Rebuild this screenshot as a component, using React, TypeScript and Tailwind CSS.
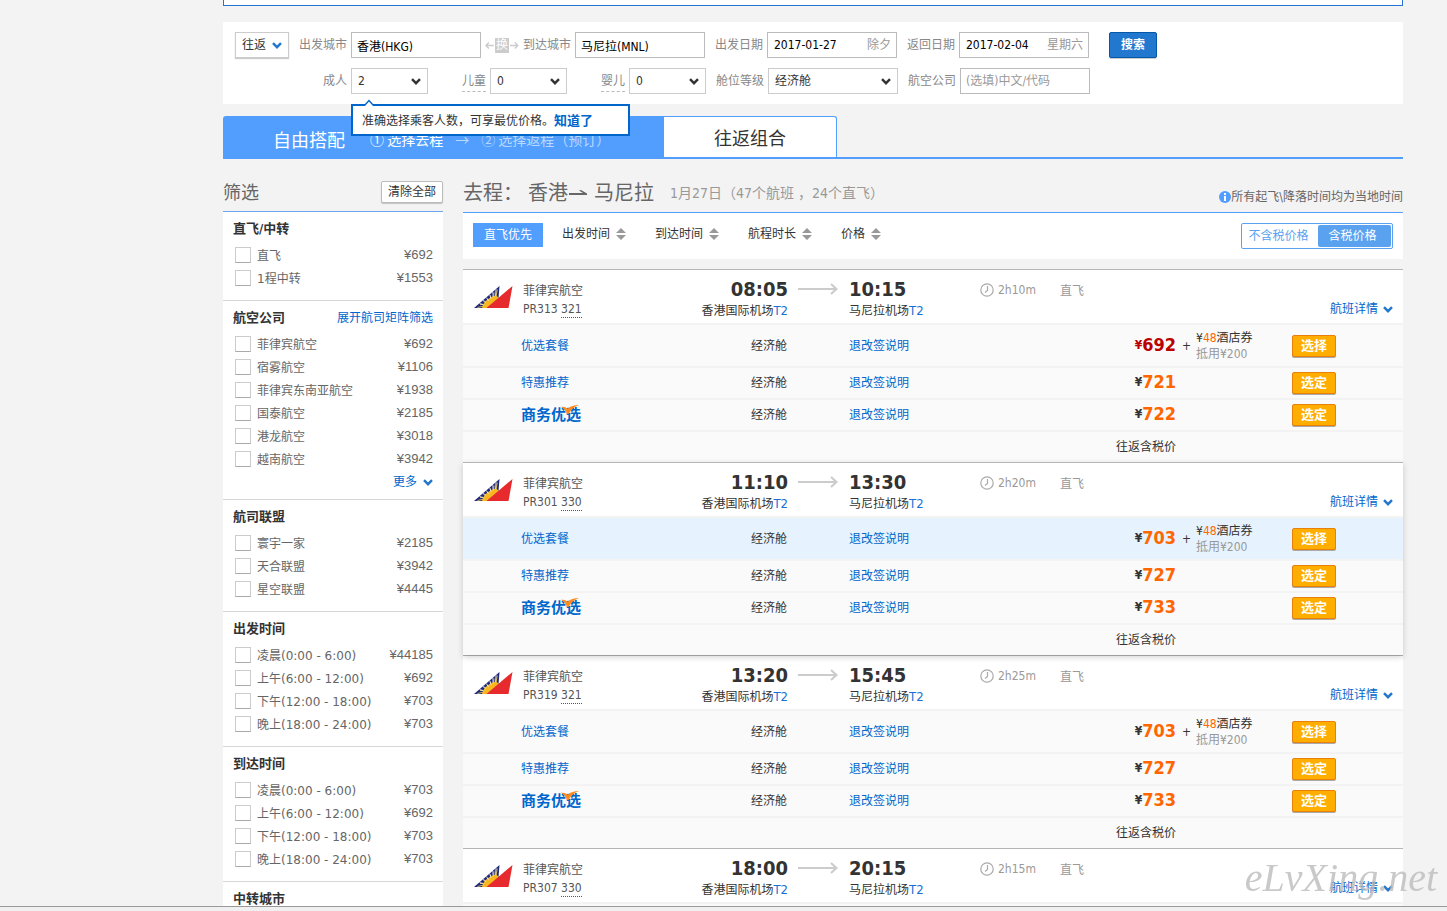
import { useState } from "react";
import type { ReactNode } from "react";
import clsx from "clsx";

type FilterOption = { label: string; price: string };

type FilterGroup = {
  title: string;
  link?: string;
  more?: boolean;
  options: FilterOption[];
};

const filterGroups: FilterGroup[] = [
  {
    title: "直飞/中转",
    options: [
      { label: "直飞", price: "¥692" },
      { label: "1程中转", price: "¥1553" },
    ],
  },
  {
    title: "航空公司",
    link: "展开航司矩阵筛选",
    more: true,
    options: [
      { label: "菲律宾航空", price: "¥692" },
      { label: "宿雾航空", price: "¥1106" },
      { label: "菲律宾东南亚航空", price: "¥1938" },
      { label: "国泰航空", price: "¥2185" },
      { label: "港龙航空", price: "¥3018" },
      { label: "越南航空", price: "¥3942" },
    ],
  },
  {
    title: "航司联盟",
    options: [
      { label: "寰宇一家", price: "¥2185" },
      { label: "天合联盟", price: "¥3942" },
      { label: "星空联盟", price: "¥4445" },
    ],
  },
  {
    title: "出发时间",
    options: [
      { label: "凌晨(0:00 - 6:00)", price: "¥44185" },
      { label: "上午(6:00 - 12:00)", price: "¥692" },
      { label: "下午(12:00 - 18:00)", price: "¥703" },
      { label: "晚上(18:00 - 24:00)", price: "¥703" },
    ],
  },
  {
    title: "到达时间",
    options: [
      { label: "凌晨(0:00 - 6:00)", price: "¥703" },
      { label: "上午(6:00 - 12:00)", price: "¥692" },
      { label: "下午(12:00 - 18:00)", price: "¥703" },
      { label: "晚上(18:00 - 24:00)", price: "¥703" },
    ],
  },
  { title: "中转城市", options: [] },
];

type Flight = {
  no: string;
  plane: string;
  depart: string;
  arrive: string;
  duration: string;
  prices: [string, string, string];
  lowest?: boolean;
  active?: boolean;
};

const flights: Flight[] = [
  { no: "PR313", plane: "321", depart: "08:05", arrive: "10:15", duration: "2h10m", prices: ["692", "721", "722"], lowest: true },
  { no: "PR301", plane: "330", depart: "11:10", arrive: "13:30", duration: "2h20m", prices: ["703", "727", "733"], active: true },
  { no: "PR319", plane: "321", depart: "13:20", arrive: "15:45", duration: "2h25m", prices: ["703", "727", "733"] },
  { no: "PR307", plane: "330", depart: "18:00", arrive: "20:15", duration: "2h15m", prices: ["703", "727", "733"] },
];

const sortKeys = ["出发时间", "到达时间", "航程时长", "价格"];

function Chevron({ className }: { className?: string }) {
  return (
    <svg viewBox="0 0 10 7" className={clsx("h-[7px] w-[10px] shrink-0", className)} fill="none" stroke="currentColor" strokeWidth="2.4">
      <path d="M1 1.2 5 5.2 9 1.2" />
    </svg>
  );
}

function SortIcon() {
  return (
    <svg viewBox="0 0 10 12" className="h-3 w-[10px] fill-[#999]">
      <path d="M5 0 10 5H0zM0 7h10l-5 5z" />
    </svg>
  );
}

function AirlineLogo() {
  return (
    <svg viewBox="0 0 39 23" className="h-[23px] w-[39px]">
      <path d="M0 22 25.5 0 24.500 12 13 22z" fill="#1f2a7a" />
      <path d="M8 22C9 17 13 12 22 9.500L25 12 13 22z" fill="#f8b71c" />
      <path d="M3.500 21.500 10 20M6 18.500 11 18.500M9.500 15.500 12.500 17M13 12.500 14.500 15.500M16.500 9.500 17 13.500M20 6.500 19.500 12M23.200 3.500 22 11" stroke="#e9c55c" strokeWidth=".9" />
      <path d="M5.500 17.300 9 18.500M9 14.300 12 16.200M12.300 11.500 14.500 14.500M15.600 8.600 17 12.500M18.800 6 19 11M22 3.200 21.400 10" stroke="#fff" strokeWidth=".7" />
      <path d="M38.500 0 34.500 22H12.500z" fill="#e62a2e" />
    </svg>
  );
}

function Label({ htmlFor, dashed, className, children }: { htmlFor: string; dashed?: boolean; className?: string; children: ReactNode }) {
  return (
    <label htmlFor={htmlFor} className={clsx("shrink-0 pr-1 text-right leading-5 text-[#888]", className ?? "w-[62px]")}>
      <span className={clsx("inline-block", dashed && "border-b border-dashed border-[#bbb]")}>{children}</span>
    </label>
  );
}

function SelectBox({ id, options, className }: { id: string; options: string[]; className: string }) {
  return (
    <div className={clsx("relative h-[26px] shrink-0", className)}>
      <select id={id} className="h-full w-full appearance-none border border-[#ccc] bg-white pl-[6px] text-[#333] outline-none">
        {options.map((option) => (
          <option key={option}>{option}</option>
        ))}
      </select>
      <Chevron className="pointer-events-none absolute top-[10px] right-[7px] text-[#333]" />
    </div>
  );
}

function DateBox({ id, value, note }: { id: string; value: string; note: string }) {
  return (
    <div className="flex h-[26px] w-[130px] shrink-0 items-center border border-[#bbb] bg-white pr-[5px] pl-[6px]">
      <input id={id} defaultValue={value} className="w-0 flex-1 text-black outline-none" />
      <span className="text-[#999]">{note}</span>
    </div>
  );
}

const textBox = "h-[26px] w-[130px] shrink-0 border border-[#bbb] bg-white pl-[5px] text-black outline-none placeholder:text-[#999]";

function SearchPanel() {
  const [showTip, setShowTip] = useState(true);

  return (
    <form className="relative mt-4 flex flex-col gap-[10px] bg-white px-3 py-[10px]" onSubmit={(event) => event.preventDefault()}>
      <div className="flex items-center">
        <button type="button" className="flex h-[26px] w-[54px] shrink-0 items-center justify-between border border-[#ccc] px-[6px] text-[#333] shadow-[0_1px_1px_rgba(0,0,0,0.2)]">
          往返
          <Chevron className="text-[#2277cc]" />
        </button>
        <Label htmlFor="from">出发城市</Label>
        <input id="from" defaultValue="香港(HKG)" className={textBox} />
        <button type="button" aria-label="交换城市" className="ml-1 flex w-[34px] shrink-0 items-center justify-center gap-px text-[#ccc]">
          <svg viewBox="0 0 9 7" className="h-[7px] w-[9px]" fill="none" stroke="currentColor" strokeWidth="1.500">
            <path d="M4 .5 1 3.500 4 6.500M1 3.500h8" />
          </svg>
          <span className="h-[15px] w-[15px] bg-[#ccc] text-center leading-[15px] text-white">换</span>
          <svg viewBox="0 0 9 7" className="h-[7px] w-[9px]" fill="none" stroke="currentColor" strokeWidth="1.500">
            <path d="M5 .5 8 3.500 5 6.500M8 3.500H0" />
          </svg>
        </button>
        <Label htmlFor="to" className="w-14">到达城市</Label>
        <input id="to" defaultValue="马尼拉(MNL)" className={textBox} />
        <Label htmlFor="depart-date">出发日期</Label>
        <DateBox id="depart-date" value="2017-01-27" note="除夕" />
        <Label htmlFor="return-date">返回日期</Label>
        <DateBox id="return-date" value="2017-02-04" note="星期六" />
        <button type="submit" className="ml-5 h-[26px] w-12 shrink-0 rounded-[2px] border border-[#0557a8] bg-[#2277cf] font-bold text-white shadow-[0_1px_0_#ccc]">
          搜索
        </button>
      </div>
      <div className="flex items-center">
        <Label htmlFor="adults" className="w-[116px]">成人</Label>
        <SelectBox id="adults" options={["2", "1", "3"]} className="w-[77px]" />
        <Label htmlFor="children" dashed>儿童</Label>
        <SelectBox id="children" options={["0", "1", "2"]} className="w-[77px]" />
        <Label htmlFor="infants" dashed>婴儿</Label>
        <SelectBox id="infants" options={["0", "1", "2"]} className="w-[77px]" />
        <Label htmlFor="cabin">舱位等级</Label>
        <SelectBox id="cabin" options={["经济舱", "商务舱", "头等舱"]} className="w-[130px]" />
        <Label htmlFor="airline">航空公司</Label>
        <input id="airline" placeholder="(选填)中文/代码" className={textBox} />
      </div>

      {showTip ? (
        <div className="absolute top-full left-32 z-20 flex h-8 w-[279px] items-center border-2 border-[#0066cc] bg-white pt-[2px] pl-[9px] text-[#333]">
          <svg viewBox="0 0 10 7" className="absolute -top-[7px] left-[11px] h-[7px] w-[10px]">
            <path d="M0 7 5 1.500 10 7" fill="#fff" stroke="#0066cc" strokeWidth="1.500" />
          </svg>
          准确选择乘客人数，可享最优价格。
          <button type="button" className="text-[13px] font-bold text-[#0066cc]" onClick={() => setShowTip(false)}>
            知道了
          </button>
        </div>
      ) : null}
    </form>
  );
}

function TripTabs() {
  return (
    <div className="mt-3 flex h-[43px] border-b-2 border-[#519eff]">
      <button type="button" className="flex w-[441px] shrink-0 items-center rounded-tl-[3px] bg-[#519eff] pt-1 pl-[50px] font-['Noto_Sans_CJK_SC',sans-serif] text-white">
        <span className="text-lg">自由搭配</span>
        <span className="ml-[25px] text-sm">① 选择去程</span>
        <span className="ml-3 text-sm text-[#b9d8ff]">→</span>
        <span className="ml-3 text-sm text-[#b9d8ff]">② 选择返程（预订）</span>
      </button>
      <button type="button" className="w-[173px] shrink-0 rounded-tr-[3px] border-t border-r border-[#519eff] bg-white pt-1 text-lg text-[#333]">
        往返组合
      </button>
    </div>
  );
}

function FilterSidebar() {
  return (
    <aside className="w-[220px] shrink-0">
      <div className="flex h-[52px] items-end justify-between pb-2">
        <h2 className="text-lg leading-5 text-[#666]">筛选</h2>
        <button type="button" className="h-[22px] w-[62px] rounded-[2px] border border-[#bbb] bg-white leading-5 text-[#333] shadow-[0_1px_1px_rgba(0,0,0,0.2)]">
          清除全部
        </button>
      </div>
      {filterGroups.map((group, index) => (
        <section
          key={group.title}
          className={clsx("border-t bg-white px-[10px] pt-[6px]", index === 0 ? "border-[#6ba6ee]" : "border-[#d5d8d8]", group.more ? "pb-[9px]" : "pb-[14px]")}
        >
          <div className="mb-[7px] flex h-[22px] items-center justify-between">
            <h3 className="text-[13px] font-bold text-[#333]">{group.title}</h3>
            {group.link ? <a href="#matrix" className="text-[#0066cc]">{group.link}</a> : null}
          </div>
          <div className="flex flex-col gap-[7px]">
            {group.options.map((option) => (
              <label key={option.label} className="flex h-4 items-center pl-[2px] text-[#666]">
                <input type="checkbox" className="mr-[6px] h-4 w-4 shrink-0 appearance-none border border-[#ccc] border-b-[#aaa] bg-white checked:bg-[#519eff]" />
                <span className="pt-[2px] font-['DejaVu_Sans','Noto_Sans_CJK_SC',sans-serif]">{option.label}</span>
                <span className="ml-auto font-['Liberation_Sans',sans-serif] text-[13px]">{option.price}</span>
              </label>
            ))}
            {group.more ? (
              <a href="#more" className="flex h-4 items-center justify-end gap-[6px] text-[#0066cc]">
                更多
                <Chevron className="text-[#2277cc]" />
              </a>
            ) : null}
          </div>
        </section>
      ))}
    </aside>
  );
}

function OfferName({ index }: { index: number }) {
  if (index === 2) {
    return (
      <a href="#business" className="relative inline-block text-[15px] leading-5 font-bold text-[#0066cc]">
        商务优选
        <svg viewBox="0 0 18 9" className="absolute top-0 right-[2px] h-[9px] w-[18px]" fill="#ff8a1e">
          <path d="M0 2C3 1.500 5 2.500 6.500 4 9.500 1 13 0 18 0 13 1.500 10 4.500 7.500 9H6C5 5.500 3 3.500 0 2z" />
        </svg>
      </a>
    );
  }
  return <a href="#offer" className="text-[#0066cc]">{index === 0 ? "优选套餐" : "特惠推荐"}</a>;
}

function FlightCard({ flight }: { flight: Flight }) {
  return (
    <article className={clsx("border-t border-[#b5b5b5] bg-white", flight.active && "relative z-10 shadow-[0_2px_6px_rgba(0,0,0,0.18)]")}>
      <header className="flex h-[53px] pr-[10px]">
        <div className="w-[60px] shrink-0 pt-4 pl-[11px]">
          <AirlineLogo />
        </div>
        <div className="w-[145px] shrink-0 pt-3 leading-[18px] text-[#555]">
          <p>菲律宾航空</p>
          <p>
            {flight.no} <span className="inline-block h-[18px] border-b border-dotted border-[#555]">{flight.plane}</span>
          </p>
        </div>
        <div className="w-[120px] shrink-0 pt-[7px] text-right text-[#333]">
          <p className="text-xl leading-6 font-bold">{flight.depart}</p>
          <p className="leading-5">香港国际机场<span className="text-[13px] text-[#1a6fd4]">T2</span></p>
        </div>
        <svg viewBox="0 0 40 12" className="mx-[10px] mt-[13px] h-3 w-10 shrink-0" fill="none" stroke="#ccc" strokeWidth="2.200">
          <path d="M0 6h38M33 1l5.500 5-5.500 5" />
        </svg>
        <div className="w-[132px] shrink-0 pt-[7px] text-[#333]">
          <p className="pl-px text-xl leading-6 font-bold">{flight.arrive}</p>
          <p className="pl-px leading-5">马尼拉机场<span className="text-[13px] text-[#1a6fd4]">T2</span></p>
        </div>
        <div className="mt-3 flex h-4 w-20 shrink-0 items-center gap-1 text-[#999]">
          <svg viewBox="0 0 14 14" className="h-[14px] w-[14px]" fill="none" stroke="#aaa" strokeWidth="1.200">
            <circle cx="7" cy="7" r="6.200" />
            <path d="M7.500 3v4.500L5 9.500" />
          </svg>
          {flight.duration}
        </div>
        <p className="mt-3 leading-[18px] text-[#999]">直飞</p>
        <a href="#detail" className="mt-[30px] ml-auto flex h-[18px] shrink-0 items-center gap-[5px] text-[#0066cc]">
          航班详情
          <Chevron className="text-[#2277cc]" />
        </a>
      </header>
      <table className="w-full table-fixed border-separate border-spacing-0 bg-[#fafafa] text-[#333]">
        <colgroup>
          <col className="w-[251px]" />
          <col className="w-[110px]" />
          <col className="w-[190px]" />
          <col className="w-[162px]" />
          <col className="w-[116px]" />
          <col />
        </colgroup>
        <tbody>
          {flight.prices.map((price, index) => (
            <tr key={index} className={clsx("*:border-t-2 *:border-[#f3f3f3] *:p-0", index === 0 ? "h-[43px]" : "h-8", index === 0 && flight.active && "bg-[#e6f3ff]")}>
              <td>
                <div className="pl-[58px]">
                  <OfferName index={index} />
                </div>
              </td>
              <td className="text-center">经济舱</td>
              <td>
                <a href="#rules" className="ml-[25px] text-[#0066cc]">退改签说明</a>
              </td>
              <td className={clsx("text-right leading-5 font-bold", index === 0 && flight.lowest && "text-[#b00]")}>
                <span className="align-[2px]">¥</span>
                <span className={clsx("text-lg leading-5", index === 0 && flight.lowest ? "text-[#b00]" : "text-[#ff6600]")}>{price}</span>
              </td>
              <td>
                {index === 0 ? (
                  <div className="flex items-center pt-px pl-[6px]">
                    <span className="w-[14px]">+</span>
                    <p className="leading-4">
                      ¥<span className="text-[#ff6600]">48</span>酒店券
                      <span className="block text-[#999]">抵用¥200</span>
                    </p>
                  </div>
                ) : null}
              </td>
              <td>
                <button type="button" className="block h-[22px] w-11 rounded-[2px] border border-[#e8800a] bg-[#ffae00] text-[13px] leading-5 font-bold text-white shadow-[0_1px_0_#aaa]">
                  {index === 0 ? "选择" : "选定"}
                </button>
              </td>
            </tr>
          ))}
          <tr className="h-8 *:border-t-2 *:border-[#f3f3f3] *:p-0">
            <td colSpan={4} className="text-right">往返含税价</td>
            <td colSpan={2} />
          </tr>
        </tbody>
      </table>
    </article>
  );
}

function Results() {
  const [withTax, setWithTax] = useState(true);

  return (
    <main className="min-w-0 flex-1">
      <div className="flex h-[54px] items-end justify-between border-b border-[#519eff]">
        <h1 className="flex items-center pb-[7px] text-xl leading-6 text-[#666]">
          <span className="mr-[5px]">去程：</span>
          香港
          <svg viewBox="0 0 18 6" className="mr-[7px] ml-px h-[6px] w-[18px] fill-[#666]">
            <path d="M0 3h14L10 .5 12 0 18 3.500V5H0z" />
          </svg>
          马尼拉
          <span className="ml-4 text-sm text-[#999]">1月27日（47个航班 ，24个直飞）</span>
        </h1>
        <p className="flex items-center pb-[6px] leading-[18px] text-[#666]">
          <svg viewBox="0 0 12 12" className="h-3 w-3">
            <circle cx="6" cy="6" r="6" fill="#519eff" />
            <path d="M5 2h2v2H5zM5 5h2v5H5z" fill="#fff" />
          </svg>
          所有起飞\降落时间均为当地时间
        </p>
      </div>

      <div className="mb-[10px] flex h-[46px] items-start bg-white px-[10px] pt-[10px] text-[#333]">
        <button type="button" className="h-6 w-[70px] bg-[#519eff] text-white">直飞优先</button>
        {sortKeys.map((key, index) => (
          <button key={key} type="button" className={clsx("flex h-[22px] items-center gap-[6px]", index === 0 ? "ml-[19px]" : "ml-[29px]")}>
            {key}
            <SortIcon />
          </button>
        ))}
        <div className="ml-auto flex h-[26px] w-[152px] rounded-[2px] border border-[#5aa2f0] p-px">
          {["不含税价格", "含税价格"].map((item, index) => (
            <button
              key={item}
              type="button"
              onClick={() => setWithTax(index === 1)}
              className={clsx("h-[22px] rounded-[2px] pr-1", index === 0 ? "w-[75px]" : "w-[73px]", withTax === (index === 1) ? "bg-[#5aa2f0] text-white" : "text-[#5aa2f0]")}
            >
              {item}
            </button>
          ))}
        </div>
      </div>

      {flights.map((flight) => (
        <FlightCard key={flight.no} flight={flight} />
      ))}
    </main>
  );
}

export default function App() {
  return (
    <div lang="zh-CN" className="flex h-screen flex-col overflow-hidden bg-[#f3f3f3] font-['DejaVu_Sans_Condensed','Noto_Sans_CJK_SC',sans-serif] text-xs">
      <div className="min-h-0 flex-1 overflow-hidden pr-11 pl-[223px]">
        <div className="h-[6px] border-x border-b border-[#2874d5] bg-white" />
        <SearchPanel />
        <TripTabs />
        <div className="flex gap-5">
          <FilterSidebar />
          <Results />
        </div>
      </div>
      <div className="h-[5px] shrink-0 border-t border-[#999] bg-[#f0f0f0]" />
      <p className="pointer-events-none fixed right-[10px] bottom-2 z-30 font-['Liberation_Serif',serif] text-[40px] leading-[50px] text-[#bbb]/80 italic">
        eLvXing.net
      </p>
    </div>
  );
}
